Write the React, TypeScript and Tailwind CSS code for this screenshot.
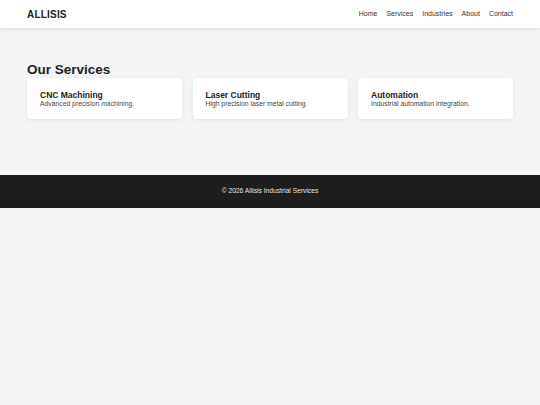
import React from 'react';

const navLinks = ['Home', 'Services', 'Industries', 'About', 'Contact'];

const services = [
  { title: 'CNC Machining', desc: 'Advanced precision machining.' },
  { title: 'Laser Cutting', desc: 'High precision laser metal cutting.' },
  { title: 'Automation', desc: 'Industrial automation integration.' },
];

export default function App() {
  return (
    <div className="min-h-[405px] bg-[#f4f5f7] font-['Liberation_Sans',Arial,sans-serif] text-[#222]">
      {/* Header */}
      <header className="h-[28px] bg-white shadow-[0_1px_4px_rgba(0,0,0,0.12)] px-[27px] flex items-center justify-between">
        <div className="text-[10px] font-bold tracking-[0.2px] text-[#222]">ALLISIS</div>
        <nav className="flex gap-[9px] text-[7px] text-[#333]">
          {navLinks.map((link) => (
            <a key={link} href="#">{link}</a>
          ))}
        </nav>
      </header>

      {/* Services */}
      <main className="px-[27px] pt-[34px] pb-[56px]">
        <h2 className="text-[13.5px] font-bold leading-[16px] text-[#222]">Our Services</h2>
        <div className="grid grid-cols-3 gap-[10.5px]">
          {services.map((s) => (
            <div key={s.title} className="h-[41px] bg-white rounded-[4px] shadow-[0_1px_4px_rgba(0,0,0,0.08)] px-[13px] pt-[12px]">
              <h3 className="text-[8.5px] font-bold leading-[10px] text-[#222]">{s.title}</h3>
              <p className="text-[6.8px] leading-[8px] text-[#444]">{s.desc}</p>
            </div>
          ))}
        </div>
      </main>

      {/* Footer */}
      <footer className="h-[33px] bg-[#1e1e1e] flex items-center justify-center text-[6.7px] text-[#e5e5e5]">
        © 2026 Allisis Industrial Services
      </footer>
    </div>
  );
}
